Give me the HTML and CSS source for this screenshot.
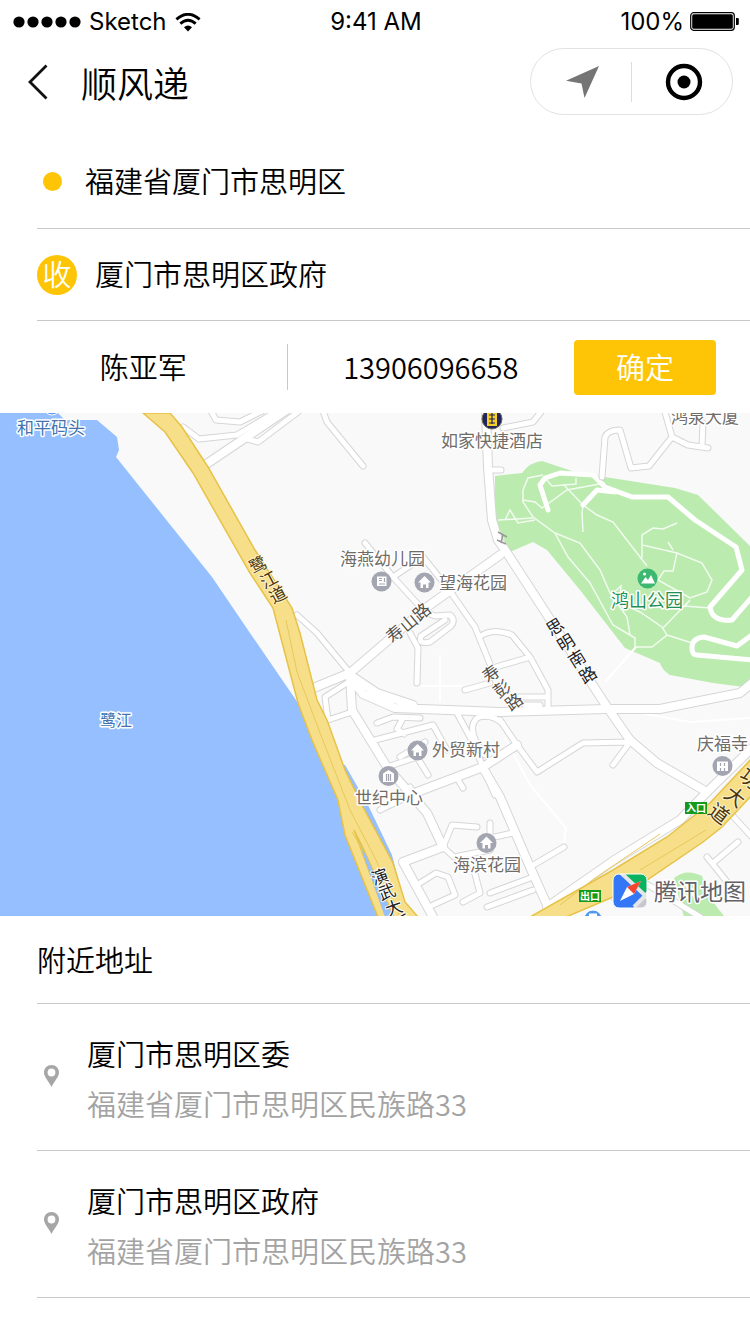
FILE: index.html
```html
<!DOCTYPE html>
<html lang="zh-CN">
<head>
<meta charset="utf-8">
<meta name="viewport" content="width=device-width, initial-scale=1">
<title>顺风递</title>
<link rel="stylesheet" href="styles.css">
</head>
<body>
<div class="status">
  <div class="status-left">
    <svg class="signal" viewBox="0 0 68 12" aria-hidden="true"><circle cx="6" cy="6" r="5.6"/><circle cx="20" cy="6" r="5.6"/><circle cx="34" cy="6" r="5.6"/><circle cx="48" cy="6" r="5.6"/><circle cx="62" cy="6" r="5.6"/></svg>
    <span>Sketch</span>
    <svg class="wifi" viewBox="0 0 26 19" aria-hidden="true"><path d="M1.4 6.4Q13-3.8 24.6 6.4M5.3 10.6Q13 3.8 20.7 10.6" fill="none" stroke="#000" stroke-width="2.8"/><path d="M9 14.2Q13 10.8 17 14.2L13 18.4Z"/></svg>
  </div>
  <span>9:41 AM</span>
  <div class="status-right">
    <span>100%</span>
    <svg class="battery" viewBox="0 0 49 20" aria-hidden="true"><rect x=".7" y=".7" width="43.6" height="17.6" rx="3" fill="#fff" stroke="#000" stroke-width="1.2"/><rect x="2.2" y="2.2" width="40.6" height="14.6" rx="1.6"/><path d="M46 6h1.6q1.2 0 1.2 1.2v4.6q0 1.2-1.2 1.2H46z"/></svg>
  </div>
</div>

<header class="nav">
  <button class="back" type="button" aria-label="返回"><svg viewBox="0 0 20 36"><path d="M18.5 1.5 2 18l16.5 16.5" fill="none" stroke="#111" stroke-width="2.8"/></svg></button>
  <h1 class="title">顺风递</h1>
  <div class="capsule">
    <button class="capsule-btn" type="button" aria-label="定位"><svg class="arrow" viewBox="0 0 34 34"><path d="M33 1 18.5 33 15.5 18.5 0 15.8Z" fill="#757575"/></svg></button>
    <button class="capsule-btn" type="button" aria-label="关闭"><svg class="target" viewBox="0 0 38 38"><circle cx="19" cy="19" r="16" fill="none" stroke="#000" stroke-width="4.4"/><circle cx="19" cy="19" r="6.5"/></svg></button>
  </div>
</header>

<main>
  <form class="form">
    <div class="row row-from">
      <span class="dot"></span>
      <input class="field" type="text" aria-label="寄件地址" value="福建省厦门市思明区">
    </div>
    <div class="row row-to">
      <label class="badge" for="to">收</label>
      <input class="field" id="to" type="text" value="厦门市思明区政府">
    </div>
    <div class="contact">
      <div class="cell"><input class="field centered" type="text" aria-label="姓名" value="陈亚军"></div>
      <div class="cell phone"><input class="field centered" type="tel" aria-label="电话" value="13906096658"></div>
      <button class="confirm" type="button">确定</button>
    </div>
  </form>

  <svg class="map" viewBox="0 413 750 503" role="img" aria-label="地图">
    <defs>
      <g id="lanes">
        <path d="M211 411 216 420 240 422 262 411M183 427 199 439 237 435 277 411M247 439 258 442 298 412M323 411 327 422 363 466"/>
        <path d="M503 428 533 422 541 412M488 470H501M602 477 605 437Q608 430 620 430L631 468 649 466 672 437 665 412M672 437 688 445 708 448M703 423 702 446"/>
        <path d="M365 543 393 577 425 612 435 616 450 615Q456 620 451 626L430 642Q418 645 421 636L445 620M393 577 423 557M410 633 418 648 417 683"/>
        <path d="M423 557 447 587 475 627 479 637 490 664M479 637Q493 627 512 635L530 657 548 690V708M493 668 530 657M465 690 490 683M513 697H547M525 705H540"/>
        <path d="M297 615 317 633 350 673M347 683 325 697 328 720 352 712M377 723 393 717 420 718M403 718 397 729 404 734M375 740 433 725 447 750M387 767 383 762M400 757 425 742M387 767 417 757 428 775"/>
        <path d="M457 713 470 737 483 767M485 755Q465 730 477 718 490 713 502 723M456 776 463 788M485 772 495 795M380 810 417 792M427 813 410 787"/>
        <path d="M443 847 452 825 477 827M443 847 454 857 490 850M470 855 480 893 463 902M420 883 436 873 448 877 455 895 433 905M490 823V838L513 833M497 860 480 862"/>
        <path d="M530 867 564 847M533 877 490 893M487 907 533 890M630 742 613 765M500 720 517 745 537 772 583 743 630 742"/>
        <path d="M707 857 732 888M713 863 738 842M730 813 752 837M613 897 640 880 700 917M697 898 688 886"/>
      </g>
      <g id="streets">
        <path d="M205 465 245 438 285 411"/>
        <path d="M486 411 488 467 492 520 498 540 507 553 607 707 630 740 657 763 707 792 680 820 613 861 547 907"/>
        <path d="M311 689 350 673 427 607 500 555M350 675 377 693 413 705M350 677 363 694 395 708 500 712 607 709H660L740 693 752 683"/>
        <path d="M350 677 352 710 387 767 427 813 443 847 403 862 433 917M417 792 483 767 517 745M483 768 500 797 530 867 548 907M707 792 752 748"/>
      </g>
      <g id="avenues">
        <path d="M143 413 165 432 193 473 250 573 273 608 298 703 312 740 338 800 345 835 378 917H386L354 830 364 850 394 917H418L405 902 393 863 363 807 345 770 327 720 317 700 300 633 292 608 255 550 208 467 182 427 170 413Z"/>
        <path d="M752 758 710 803 667 837 613 870 530 917H566L613 897 647 880 703 842 722 827 752 795Z"/>
      </g>
    </defs>
    <rect class="land" y="413" width="750" height="503"/>
    <path class="water" d="M0 413H58L65 420H97L117 437 119 450 116 457 212 577 250 633 298 703 340 765H345L368 805 392 855 401 890 408 917H0Z"/>
    <circle cx="52" cy="407" r="8" fill="#5c9af5" stroke="#fff"/>
    <path class="park" d="M495 476 522 473Q530 462 542 461L575 472 605 477 675 488 698 495 752 548V688L713 683 670 675Q662 670 660 663L625 648 580 590 547 550 533 542 510 552 503 537 495 520ZM674 878Q686 868 702 876 709 900 725 917H684Z"/>
    <g class="trail">
      <path d="M543 475 528 478 523 490V502L533 517 555 533 580 543 600 570 610 593 627 617 630 635M555 533 568 557 590 583 613 625 635 638V647H652L667 635 662 627 640 612 620 603 621 586 611 595M667 635 692 643M663 628 690 600 685 606 710 608"/>
      <path d="M658 580 690 598 707 592 712 580 702 563 677 553 642 545V535L653 528 663 529 677 523M642 545V558M677 553 673 571H664L658 580M668 542 673 550"/>
      <path d="M545 478 552 486 576 484V478M523 500 535 502 542 508 567 490 605 483M563 484 583 505 597 515 613 522 647 566M498 520 533 518M505 520 510 510 518 523 535 520M583 505 582 513 583 532"/>
      <path class="lawn" d="M636 647 605 682M505 738 530 785 566 828 563 850M640 713 690 722 750 718M440 655V702M418 686H462"/>
    </g>
    <path class="drive" d="M548 510 540 485 545 478 560 473 593 475 605 487 632 497 668 497 695 520 736 547 742 570 710 607Q712 622 732 620L752 597M583 505 597 490 615 492M752 635 737 646 704 637Q692 638 692 648 692 655 697 655L752 660"/>
    <use href="#lanes" class="lane-edge"/>
    <use href="#streets" class="street-edge"/>
    <use href="#lanes" class="lane"/>
    <use href="#streets" class="street"/>
    <use href="#avenues" class="avenue"/>
    <path class="seam" d="M286 620 297 672 322 738 350 810 376 860 400 917M660 834 595 878 560 905M706 830 640 870M352 832 364 852"/>
    <path class="water" d="M362 851 366 855 393 917H385Z"/>
    <path d="M498 532 507 537M497 540 506 544M503 534 501 543" fill="none" stroke="#999" stroke-width="1.5"/>

    <g class="poi">
      <circle cx="381.500" cy="581.500" r="10"/><circle cx="424.500" cy="582.500" r="10"/><circle cx="417.500" cy="750.500" r="10"/><circle cx="388.500" cy="776" r="10"/><circle cx="486.500" cy="843" r="10"/><circle cx="722.500" cy="766" r="10"/>
    </g>
    <g fill="#fff">
      <path id="house" d="M424.500 576 418 582.500H420.500V588H423V584.500H426V588H428.500V582.500H431Z"/>
      <use href="#house" x="-7" y="168"/><use href="#house" x="62" y="260.500"/>
      <path d="M377 576.500h9.500v9.500h-9.500zM388.500 770 394 773.500V782H383V773.500Z"/>
      <path d="M717 761.500h11v9.500h-11z"/>
    </g>
    <path d="M379 578.500h3M379 580.500h3M384.500 578v4M379 584h6M386.500 774v7M388.500 774v7M390.500 774v7M720.500 763v3M724.500 763v3M720.500 768v3M724.500 768v3" fill="none" stroke="#a3a5b0" stroke-width="1.200"/>
    <circle cx="647.500" cy="578.500" r="10" fill="#3cb871"/><path d="M641 583.500 645.500 577 648 580 651 575 655 583.500Z" fill="#fff"/><circle cx="644.500" cy="574" r="1.600" fill="#fff"/>
    <circle cx="492" cy="419" r="10" fill="#20245f" stroke="#6f6a52"/><path d="M487 411h10v15h-10z" fill="#f5cf27"/><path d="M489 415h6M489 419h6M492 412v12M489 423h6" stroke="#20245f" stroke-width="1.200"/>
    <circle cx="593" cy="919" r="9" fill="#5598ee" stroke="#fff"/><path d="M589 913.500h8v3h-8z" fill="#fff"/>

    <g class="label">
      <text x="441" y="447">如家快捷酒店</text><text x="671" y="423">鸿泉大厦</text><text x="340" y="565">海燕幼儿园</text><text x="439" y="589">望海花园</text><text x="432" y="756">外贸新村</text><text x="355" y="804">世纪中心</text><text x="453" y="871">海滨花园</text><text x="697" y="750">庆福寺</text>
    </g>
    <text class="label label-water" x="17" y="434">和平码头</text>
    <text class="label label-water small" x="100" y="726">鹭江</text>
    <text class="label label-park" x="611" y="607">鸿山公园</text>
    <g class="label road">
      <text transform="translate(395 634) rotate(-40)" y="6">寿</text><text transform="translate(409 623) rotate(-40)" y="6">山</text><text transform="translate(422 612) rotate(-40)" y="6">路</text>
      <text transform="translate(491 674) rotate(-36)" y="6">寿</text><text transform="translate(502 689) rotate(-36)" y="6">彭</text><text transform="translate(514 702) rotate(-36)" y="6">路</text>
    </g>
    <g class="label road dark">
      <text transform="translate(555 627) rotate(-32)" y="6">思</text><text transform="translate(566 643) rotate(-32)" y="6">明</text><text transform="translate(577 659) rotate(-32)" y="6">南</text><text transform="translate(588 675) rotate(-32)" y="6">路</text>
      <text transform="translate(380 877) rotate(-20)" y="6">演</text><text transform="translate(387 892) rotate(-20)" y="6">武</text><text transform="translate(394 908) rotate(-20)" y="6">大</text><text transform="translate(402 923) rotate(-20)" y="6">桥</text>
    </g>
    <g class="label road brown">
      <text transform="translate(258 565) rotate(-28)" y="6">鹭</text><text transform="translate(269 580) rotate(-28)" y="6">江</text><text transform="translate(278 595) rotate(-28)" y="6">道</text>
    </g>
    <g class="label road brown large">
      <text transform="translate(750 779) rotate(38)" y="7">功</text><text transform="translate(735 797) rotate(38)" y="7">大</text><text transform="translate(719 814) rotate(38)" y="7">道</text>
    </g>
    <g class="exit">
      <rect x="685" y="802" width="22" height="12"/><text x="696" y="812">入口</text>
      <rect x="579" y="890" width="22" height="12"/><text x="590" y="900">出口</text>
    </g>

    <g>
      <clipPath id="tile"><rect x="613" y="874" width="34" height="34" rx="6"/></clipPath>
      <g clip-path="url(#tile)">
        <path d="M613 874h34v34h-34z" fill="#3377f6"/><path d="M624 874h23v22z" fill="#09b35f"/><path d="M647 896v12h-14z" fill="#c6c8cb"/><path d="M619 871 651 901M634 907 648 893" stroke="#e4e6ea" stroke-width="4"/>
        <path d="M641 881 627 887 620 901 634 894Z" fill="#fff"/><path d="M641 881 627 887 634 894Z" fill="#f4462f"/>
      </g>
      <rect x="613" y="874" width="34" height="34" rx="6" fill="none" stroke="#fff"/>
      <text class="label brand" x="654" y="900">腾讯地图</text>
    </g>
  </svg>

  <section class="nearby">
    <h2 class="heading">附近地址</h2>
    <ul class="list">
      <li><button class="place" type="button">
        <svg class="pin" viewBox="0 0 15 22" aria-hidden="true"><path fill-rule="evenodd" d="M7.500 0C3.300 0 0 3.200 0 7.300 0 12 4.500 16 7.500 22 10.500 16 15 12 15 7.300 15 3.200 11.700 0 7.500 0ZM7.500 3.600A3.900 3.900 0 1 1 7.500 11.400 3.900 3.900 0 1 1 7.500 3.600Z"/></svg>
        <span class="place-text"><span class="name">厦门市思明区委</span><span class="addr">福建省厦门市思明区民族路33</span></span>
      </button></li>
      <li><button class="place" type="button">
        <svg class="pin" viewBox="0 0 15 22" aria-hidden="true"><path fill-rule="evenodd" d="M7.500 0C3.300 0 0 3.200 0 7.300 0 12 4.500 16 7.500 22 10.500 16 15 12 15 7.300 15 3.200 11.700 0 7.500 0ZM7.500 3.600A3.900 3.900 0 1 1 7.500 11.400 3.900 3.900 0 1 1 7.500 3.600Z"/></svg>
        <span class="place-text"><span class="name">厦门市思明区政府</span><span class="addr">福建省厦门市思明区民族路33</span></span>
      </button></li>
    </ul>
  </section>
</main>
</body>
</html>
```

FILE: styles.css
```css
* { box-sizing: border-box; margin: 0; padding: 0; }
body { background: #fff; color: #000; font: 350 29px/44px "Noto Sans CJK SC", sans-serif; }
button, input { font: inherit; color: inherit; background: none; border: 0; }
button { cursor: pointer; }
svg { display: block; flex: none; }

.status { display: grid; grid-template-columns: 1fr auto 1fr; align-items: center; height: 44px; padding: 0 11px 0 13px; font: 400 24px/28px Inter, sans-serif; }
.status-left, .status-right { display: flex; align-items: center; gap: 8px; }
.status-right { justify-content: flex-end; gap: 6px; }
.signal { width: 68px; height: 12px; }
.wifi { width: 26px; height: 19px; }
.battery { width: 49px; height: 20px; }

.nav { display: flex; align-items: center; height: 75px; padding: 0 17px 0 28px; }
.back { width: 20px; }
.back svg { width: 20px; height: 36px; }
.title { flex: 1; margin-left: 33px; font-size: 36px; font-weight: 350; }
.capsule { display: flex; align-items: center; width: 203px; height: 67px; border: 1px solid #e2e2e2; border-radius: 34px; }
.capsule-btn { flex: 1; display: flex; align-items: center; justify-content: center; height: 40px; padding-left: 4px; }
.capsule-btn + .capsule-btn { border-left: 1px solid #ddd; }
.arrow { width: 34px; height: 34px; }
.target { width: 38px; height: 38px; }

.form { padding-top: 15px; }
.row { display: flex; align-items: center; margin-left: 37px; border-bottom: 1px solid #c8c8c8; }
.row-from { height: 95px; gap: 23px; padding-left: 6px; }
.row-to { height: 92px; gap: 18px; }
.field { flex: 1; min-width: 0; width: 100%; height: 44px; padding-bottom: 3px; outline: 0; }
.centered { text-align: center; }
.dot { width: 19px; height: 19px; border-radius: 50%; background: #fdc506; }
.badge { width: 40px; height: 40px; border-radius: 50%; background: #fdc506; color: #fff; line-height: 37px; text-align: center; }
.contact { display: flex; align-items: center; height: 92px; padding-right: 34px; }
.cell { flex: 1; display: flex; align-items: center; height: 46px; }
.phone { border-left: 1px solid #c8c8c8; }
.confirm { width: 142px; height: 55px; padding-bottom: 3px; border-radius: 4px; background: #fdc506; color: #fff; }

.map { width: 100%; height: auto; font-family: "Noto Sans CJK SC", sans-serif; font-weight: 400; }
.land { fill: #f9f9f9; }
.water { fill: #95bffe; }
.park { fill: #bbebaf; }
.trail { fill: none; stroke: #f2fbef; stroke-width: 1.5; }
.lawn { stroke: #fff; stroke-width: 2; }
.drive { fill: none; stroke: #fff; stroke-width: 5; stroke-linejoin: round; stroke-linecap: round; }
.lane-edge, .lane, .street-edge, .street { fill: none; stroke-linejoin: round; stroke-linecap: round; }
.lane-edge { stroke: #d6d6d8; stroke-width: 7; }
.lane { stroke: #fff; stroke-width: 5; }
.street-edge { stroke: #d6d6d8; stroke-width: 10; }
.street { stroke: #fff; stroke-width: 8; }
.avenue { fill: #f7df8a; stroke: #e6c247; stroke-width: 1.5; }
.seam { fill: none; stroke: #e8c85a; stroke-width: 1; }
.poi { fill: #a3a5b0; }
.label { fill: #706c68; font-size: 17px; paint-order: stroke; stroke: #fff; stroke-width: 3px; stroke-linejoin: round; }
.label-water { fill: #4273b0; }
.small { font-size: 16px; }
.label-park { fill: #1f9154; font-size: 18px; }
.road { fill: #55504a; font-size: 17px; stroke-width: 2px; text-anchor: middle; }
.dark { fill: #222; }
.brown { fill: #4b3510; stroke: #fff3c4; }
.large { font-size: 20px; }
.exit { fill: #149a1c; }
.exit text { fill: #fff; font-size: 10px; font-weight: 700; text-anchor: middle; }
.brand { fill: #626266; font-size: 23px; }

.heading { height: 87px; padding-left: 37px; font-size: 29px; font-weight: 350; line-height: 86px; }
.list { list-style: none; margin-left: 37px; border-top: 1px solid #c8c8c8; }
.place { display: flex; align-items: center; gap: 28px; width: 100%; padding: 24px 0 22px 7px; border-bottom: 1px solid #c8c8c8; text-align: left; line-height: 50px; }
.pin { width: 15px; height: 22px; margin-bottom: 5px; fill: #a6a6a6; }
.place-text { display: grid; }
.addr { color: #a3a3a3; }
```
